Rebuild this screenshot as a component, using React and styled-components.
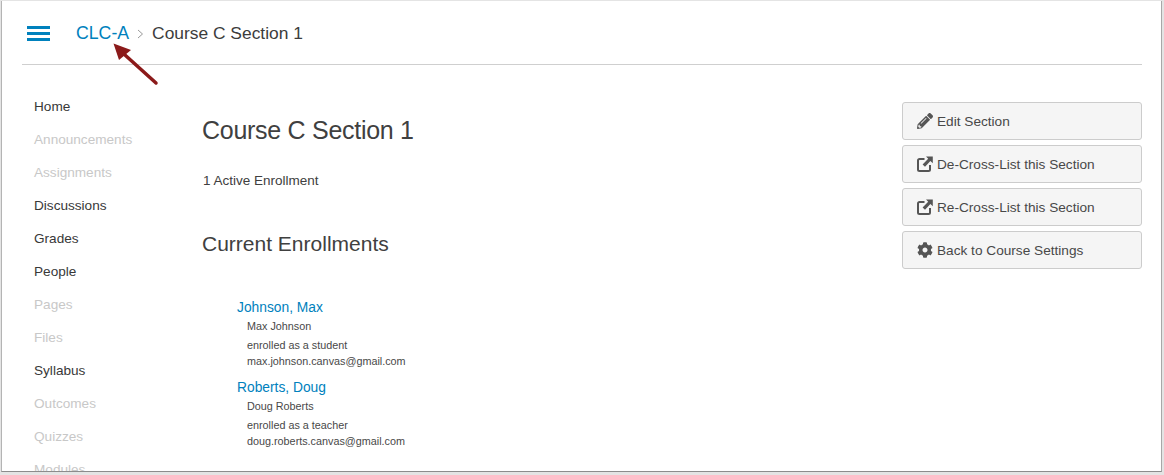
import React from 'react';
import styled, { createGlobalStyle } from 'styled-components';
import { FaPencilAlt, FaCog } from 'react-icons/fa';

const Global = createGlobalStyle`
  html, body {
    margin: 0;
    padding: 0;
    background: #fff;
    overflow: hidden;
  }
  body {
    font-family: "Liberation Sans", Arial, sans-serif;
    color: #3c3c3c;
  }
`;

const Stage = styled.div`
  width: 1164px;
  height: 475px;
  box-sizing: border-box;
  padding: 1px 1px 2px 1px;
  background: #e4e4e4;
`;

const Frame = styled.div`
  position: relative;
  width: 1161px;
  height: 471px;
  box-sizing: border-box;
  background: #fff;
  border-left: 1px solid #b4b4b4;
  border-right: 1px solid #a8a8a8;
  border-bottom: 1px solid #8c8c8c;
  overflow: hidden;
  padding: 0 20px;
`;

const Header = styled.header`
  height: 64px;
  width: 1120px;
  box-sizing: border-box;
  border-bottom: 1px solid #cfcfcf;
  display: flex;
  align-items: center;
  padding-left: 5px;
`;

const Burger = styled.div`
  width: 23px;
  height: 15px;
  margin: 2px 26px 0 0;
  display: flex;
  flex-direction: column;
  justify-content: space-between;
`;

const BurgerBar = styled.span`
  display: block;
  height: 3px;
  background: #0081bd;
`;

const Crumb = styled.a`
  font-size: 17.7px;
  margin-top: 2px;
  color: #0081bd;
  text-decoration: none;
`;

const Sep = styled.svg`
  width: 7px;
  height: 10px;
  margin: 3px 8px 0 8px;
`;

const Current = styled.span`
  font-size: 17.4px;
  margin-top: 2px;
  color: #3c3c3c;
`;

const Body = styled.div`
  display: flex;
  width: 1120px;
`;

const Nav = styled.nav`
  width: 180px;
  padding: 25px 0 0 12px;
  box-sizing: border-box;
  flex-shrink: 0;
`;

const NavItem = styled.div`
  height: 33px;
  line-height: 33px;
  font-size: 13.6px;
  color: ${(p) => (p.$off ? '#c8c8c8' : '#383838')};
`;

const Main = styled.main`
  flex: 1;
  padding-top: 49px;
`;

const Title = styled.h1`
  margin: 0;
  font-size: 25px;
  letter-spacing: -0.28px;
  line-height: 32px;
  font-weight: 400;
  color: #404040;
`;

const Count = styled.p`
  margin: 25px 0 0 1px;
  font-size: 13.5px;
  line-height: 20px;
  color: #404040;
`;

const SubTitle = styled.h2`
  margin: 39px 0 0;
  font-size: 21px;
  line-height: 28px;
  font-weight: 400;
  color: #404040;
`;

const List = styled.div`
  margin: 38px 0 0 35px;
`;

const Person = styled.div`
  margin-bottom: 7px;
`;

const PersonLink = styled.a`
  display: block;
  padding-top: 2px;
  font-size: 13.8px;
  line-height: 20px;
  color: #0081bd;
  text-decoration: none;
`;

const Detail = styled.div`
  padding-left: 10px;
  font-size: 10.8px;
  line-height: 16px;
  color: #484848;
  margin-top: ${(p) => p.$gap || 0}px;
`;

const Side = styled.aside`
  width: 240px;
  flex-shrink: 0;
  padding-top: 37px;
  display: flex;
  flex-direction: column;
  gap: 5px;
`;

const Button = styled.div`
  height: 38px;
  box-sizing: border-box;
  background: #f5f5f5;
  border: 1px solid #cccccc;
  border-radius: 3px;
  display: flex;
  align-items: center;
  gap: 4px;
  padding-left: 14px;
  font-size: 13.65px;
  color: #484848;
  svg {
    width: 16px;
    height: 16px;
    color: #555555;
    flex-shrink: 0;
  }
`;

const Arrow = styled.svg`
  position: absolute;
  left: 108px;
  top: 40px;
  width: 56px;
  height: 50px;
`;

const ExternalIcon = () => (
  <svg viewBox="0 0 16 16">
    <path
      fill="none"
      stroke="currentColor"
      strokeWidth="2"
      d="M7.500 3H2.500a1.500 1.500 0 0 0-1.500 1.500v9a1.500 1.500 0 0 0 1.500 1.500h9a1.500 1.500 0 0 0 1.500-1.500V9"
    />
    <path fill="currentColor" d="M9 0.500H15.800V7.300L13.400 5 8 10.800 5.600 8.400 11.200 2.800z" />
  </svg>
);

const links = [
  ['Home', false],
  ['Announcements', true],
  ['Assignments', true],
  ['Discussions', false],
  ['Grades', false],
  ['People', false],
  ['Pages', true],
  ['Files', true],
  ['Syllabus', false],
  ['Outcomes', true],
  ['Quizzes', true],
  ['Modules', true],
];

function App() {
  return (
    <>
      <Global />
      <Stage>
        <Frame>
          <Header>
            <Burger>
              <BurgerBar />
              <BurgerBar />
              <BurgerBar />
            </Burger>
            <Crumb href="#">CLC-A</Crumb>
            <Sep viewBox="0 0 7 10">
              <path d="M1 1l4.500 4L1 9" fill="none" stroke="#999999" strokeWidth="1" />
            </Sep>
            <Current>Course C Section 1</Current>
          </Header>
          <Body>
            <Nav>
              {links.map(([name, off]) => (
                <NavItem key={name} $off={off}>
                  {name}
                </NavItem>
              ))}
            </Nav>
            <Main>
              <Title>Course C Section 1</Title>
              <Count>1 Active Enrollment</Count>
              <SubTitle>Current Enrollments</SubTitle>
              <List>
                <Person>
                  <PersonLink href="#">Johnson, Max</PersonLink>
                  <Detail>Max Johnson</Detail>
                  <Detail $gap={3}>enrolled as a student</Detail>
                  <Detail>max.johnson.canvas@gmail.com</Detail>
                </Person>
                <Person>
                  <PersonLink href="#">Roberts, Doug</PersonLink>
                  <Detail>Doug Roberts</Detail>
                  <Detail $gap={3}>enrolled as a teacher</Detail>
                  <Detail>doug.roberts.canvas@gmail.com</Detail>
                </Person>
              </List>
            </Main>
            <Side>
              <Button>
                <FaPencilAlt />
                Edit Section
              </Button>
              <Button>
                <ExternalIcon />
                De-Cross-List this Section
              </Button>
              <Button>
                <ExternalIcon />
                Re-Cross-List this Section
              </Button>
              <Button>
                <FaCog />
                Back to Course Settings
              </Button>
            </Side>
          </Body>
          <Arrow viewBox="0 0 56 50">
            <path d="M46 42L15 14" stroke="#8b1a1a" strokeWidth="3.500" strokeLinecap="round" fill="none" />
            <path d="M3.500 2.500L21 9 9 19z" fill="#8b1a1a" />
          </Arrow>
        </Frame>
      </Stage>
    </>
  );
}

export default App;
